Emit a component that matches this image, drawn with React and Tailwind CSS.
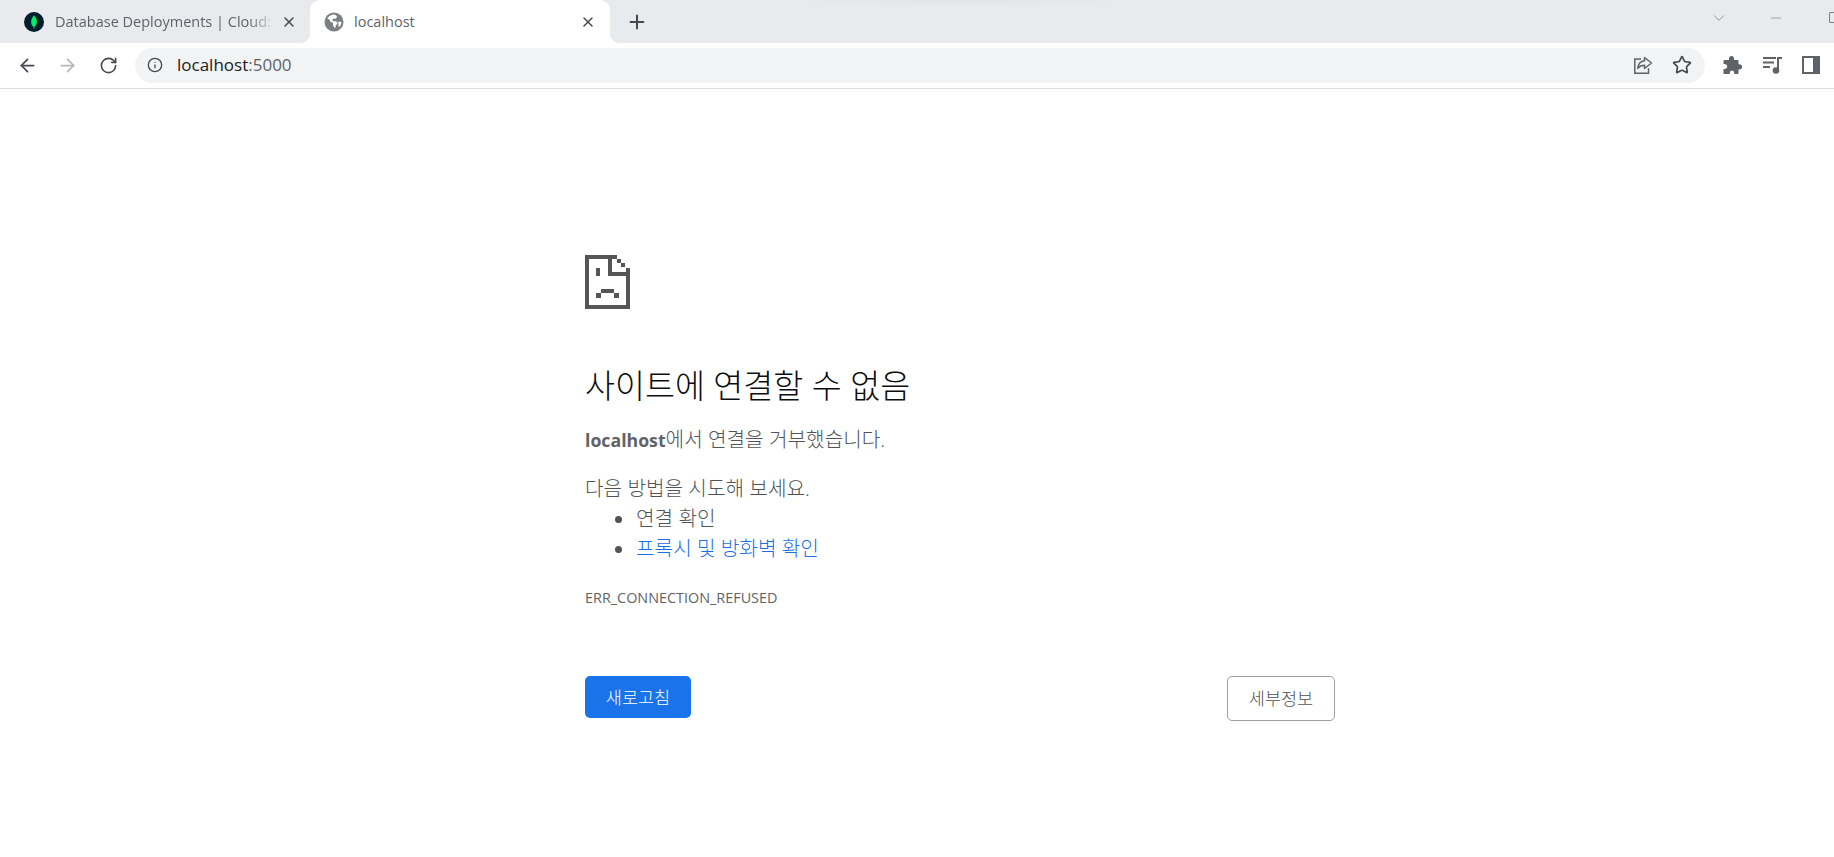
import React from 'react';
import { ArrowLeft, ArrowRight, RotateCw, X, Plus, Info, Star, ChevronDown, Minus } from 'lucide-react';

const uiFont = { fontFamily: '"Open Sans", "Noto Sans CJK KR", sans-serif' };

const MongoIcon = () => (
  <svg width="20" height="20" viewBox="0 0 20 20" className="shrink-0">
    <circle cx="10" cy="10" r="10" fill="#001e2b" />
    <path d="M10 3.2c1.9 2.2 2.9 4.4 2.9 6.6 0 2.500-1.300 4.300-2.500 5.200l-.2 2h-.5l-.2-2c-1.200-.9-2.400-2.700-2.400-5.200 0-2.200 1-4.400 2.900-6.600z" fill="#00ed64" />
  </svg>
);

const GlobeIcon = () => (
  <svg width="20" height="20" viewBox="0 0 20 20" className="shrink-0">
    <circle cx="10" cy="10" r="9.500" fill="#7c8085" />
    <path d="M9 2.500 5.500 4 3.200 6.500l2.300 1.300 1.300 2.200 2.200.8v2.400l1.500 2.800 1-.6.300-2 2-2.400-1.800-1.700H9.500L8 8l2-1.500 2 .3 1-2.500-2-1.500z M14.500 9.500l2.800.4c.1 2-.7 3.800-2 5.100l-1-1.500z" fill="#ffffff" />
  </svg>
);

const ShareIcon = () => (
  <svg width="22" height="22" viewBox="0 0 22 22" fill="none" stroke="#5f6368" strokeWidth="1.500">
    <path d="M9 5H2.800v14.200h13.700v-5" />
    <path d="M12.500 3.500 19.500 9l-7 5.500v-3.200c-3 0-5 .8-6.700 3 .3-4 2.700-7 6.700-7.500z" strokeLinejoin="round" />
  </svg>
);

const PuzzleIcon = () => (
  <svg width="20" height="20" viewBox="0 0 20 20" fill="#5f6368">
    <path d="M7 3.500a2.500 2.500 0 0 1 5 0V5h3.500a1 1 0 0 1 1 1v3.200h1a2.600 2.600 0 0 1 0 5.200h-1V18a1 1 0 0 1-1 1h-3.300v-1.300a2.200 2.200 0 0 0-4.400 0V19H1.500v-5h1.200a2.500 2.500 0 0 0 0-5H1.500V6a1 1 0 0 1 1-1H7z" />
  </svg>
);

const MediaIcon = () => (
  <svg width="22" height="20" viewBox="0 0 22 20" fill="#5f6368">
    <rect x="1" y="2" width="13" height="2" />
    <rect x="1" y="6.500" width="11" height="2" />
    <rect x="1" y="11" width="7" height="2" />
    <rect x="15" y="2" width="5" height="2" />
    <rect x="15" y="2" width="2" height="13" />
    <circle cx="14" cy="15.500" r="3.300" />
  </svg>
);

const SidePanelIcon = () => (
  <svg width="18" height="18" viewBox="0 0 18 18" fill="none">
    <rect x="1" y="1" width="16" height="16" stroke="#5f6368" strokeWidth="2" />
    <rect x="11" y="1" width="6" height="16" fill="#5f6368" />
  </svg>
);

// pixel style sad page, one eye shows, the fold covers the other
const SadPage = () => (
  <svg width="45" height="54" viewBox="0 0 45 54" fill="#555555" shapeRendering="crispEdges">
    <path d="M0 0h32v4H4v46h37V13h4v41H0z" />
    <path d="M23 4h4v13h14v4H23z" />
    <rect x="32" y="4" width="4" height="4" />
    <rect x="36" y="8" width="4" height="4" />
    <rect x="11" y="13" width="4" height="8" />
    <rect x="16" y="34" width="13" height="4" />
    <rect x="11" y="38" width="5" height="5" />
    <rect x="29" y="38" width="5" height="5" />
  </svg>
);

const TabStrip = () => (
  <div className="flex h-[43px] items-stretch bg-[#e8eaed] bg-[radial-gradient(ellipse_170px_7px_at_960px_0,#e2e3e6,transparent)] text-[14.5px]" style={uiFont}>
    <div className="flex w-[310px] items-center pl-[24px] pr-[12px] text-[#5f6368]">
      <MongoIcon />
      <span className="ml-[11px] w-[220px] overflow-hidden whitespace-nowrap [mask-image:linear-gradient(to_right,black_88%,transparent)]">Database Deployments | Cloud: MongoDB</span>
      <X size={16} strokeWidth={2.2} className="ml-[6px] text-[#45484d]" />
    </div>
    <div className="relative flex w-[300px] items-center rounded-t-[10px] bg-white pl-[14px] pr-[14px] text-[#5f6368] before:absolute before:bottom-0 before:-left-[10px] before:h-[10px] before:w-[10px] before:bg-[radial-gradient(circle_at_0_0,transparent_10px,white_10.5px)] after:absolute after:bottom-0 after:-right-[10px] after:h-[10px] after:w-[10px] after:bg-[radial-gradient(circle_at_100%_0,transparent_10px,white_10.5px)]">
      <GlobeIcon />
      <span className="ml-[10px] flex-1">localhost</span>
      <X size={16} strokeWidth={2.2} className="text-[#45484d]" />
    </div>
    <div className="ml-[16px] flex items-center">
      <Plus size={22} strokeWidth={2.200} className="text-[#45484d]" />
    </div>
    <div className="ml-auto flex items-center pb-[8px] text-[#7d8085]">
      <ChevronDown size={18} strokeWidth={1} />
      <Minus size={16} strokeWidth={1} className="ml-[40px]" />
      <div className="ml-[45px] h-[11px] w-[5px] rounded-l-[2px] border border-r-0 border-[#7d8085]" />
    </div>
  </div>
);

const Toolbar = () => (
  <div className="flex h-[46px] items-center border-b border-[#dadce0] bg-white pb-[1px]">
    <div className="flex w-[135px] items-center pl-[17px] text-[#45484d]">
      <ArrowLeft size={21} strokeWidth={2} />
      <ArrowRight size={21} strokeWidth={2} className="ml-[19px] text-[#b3b6ba]" />
      <RotateCw size={19} strokeWidth={2} className="ml-[21px]" />
    </div>
    <div className="flex h-[35px] w-[1570px] items-center rounded-full bg-[#f1f3f4] pl-[12px] pr-[13px]">
      <Info size={16} strokeWidth={2} className="text-[#45484d]" />
      <span className="ml-[14px] flex-1 text-[17px] text-[#202124]" style={uiFont}>
        localhost<span className="text-[#5f6368]">:5000</span>
      </span>
      <ShareIcon />
      <Star size={20} strokeWidth={2} className="ml-[18px] text-[#45484d]" />
    </div>
    <div className="ml-[17px] flex items-center">
      <PuzzleIcon />
      <div className="ml-[20px]"><MediaIcon /></div>
      <div className="ml-[18px]"><SidePanelIcon /></div>
    </div>
  </div>
);

const ErrorPage = () => (
  <div className="ml-[585px] w-[750px] pt-[166px] text-[20.2px] font-light text-[#505357]" style={uiFont}>
    <SadPage />
    <h1 className="mt-[55px] text-[32.6px] font-light leading-[43px] text-[#0c0d0f]">사이트에 연결할 수 없음</h1>
    <p className="mt-[17px] leading-[31px]"><b className="text-[17.7px] font-bold text-[#5f6368]">localhost</b>에서 연결을 거부했습니다.</p>
    <p className="mt-[17px] leading-[30px]">다음 방법을 시도해 보세요.</p>
    <ul className="list-disc pl-[51px] leading-[30px]">
      <li>연결 확인</li>
      <li><span className="text-[#1a6fe6]">프록시 및 방화벽 확인</span></li>
    </ul>
    <div className="mt-[25px] text-[14.4px] font-normal leading-[20px] text-[#5f6368]">ERR_CONNECTION_REFUSED</div>
    <div className="mt-[68px] flex items-start justify-between text-[17.5px]">
      <button className="h-[42px] w-[106px] rounded-[5px] bg-[#1a73e8] pt-[1px] text-white">새로고침</button>
      <button className="h-[45px] w-[108px] rounded-[5px] border border-[#9aa0a6] bg-white text-[#505357]">세부정보</button>
    </div>
  </div>
);

export default function App() {
  return (
    <div className="h-[857px] w-[1834px] overflow-hidden bg-white">
      <TabStrip />
      <Toolbar />
      <ErrorPage />
    </div>
  );
}
